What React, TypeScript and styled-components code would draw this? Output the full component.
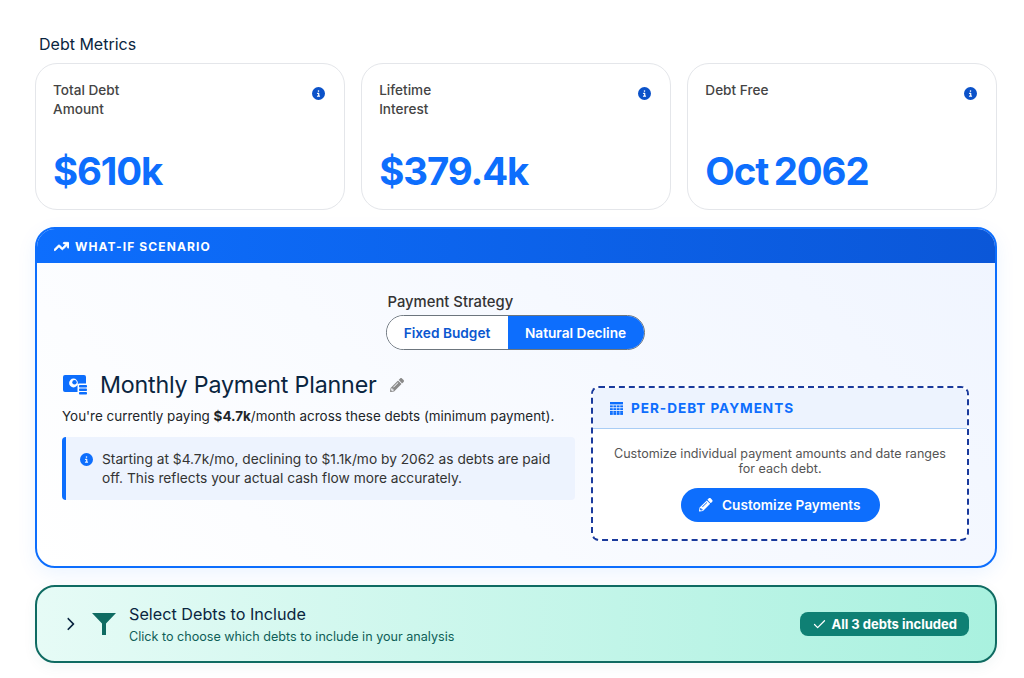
import React from "react";
import styled, { createGlobalStyle } from "styled-components";
import { FaCircleInfo, FaArrowTrendUp, FaChevronRight } from "react-icons/fa6";
import { FaPencilAlt } from "react-icons/fa";
import { Check } from "lucide-react";

const GlobalStyle = createGlobalStyle`
  html, body {
    margin: 0;
    padding: 0;
    background: #ffffff;
  }
  body {
    font-family: Inter, "Liberation Sans", sans-serif;
    -webkit-font-smoothing: antialiased;
  }
`;

const metrics = [
  { label: "Total Debt Amount", value: "$610k" },
  { label: "Lifetime Interest", value: "$379.4k" },
  { label: "Debt Free", value: "Oct 2062" },
];

const BillIcon = () => (
  <svg width="24" height="20" viewBox="0 0 24 20" aria-hidden="true">
    <path
      fill="#0d6efd"
      fillRule="evenodd"
      d="M2 0h19a2 2 0 0 1 2 2v6.5h-7a1.5 1.5 0 0 0-1.5 1.5v7H2a2 2 0 0 1-2-2V2a2 2 0 0 1 2-2zm8.5 3.6a4.4 4.4 0 0 0-4.4 4.4 4.4 4.4 0 0 0 4.4 4.4 4.4 4.4 0 0 0 4.4-4.4 4.4 4.4 0 0 0-4.4-4.4z"
    />
    <circle cx="11.5" cy="7.2" r="2.2" fill="#0d6efd" />
    <rect x="16" y="10" width="8" height="2.6" rx="0.8" fill="#0d6efd" />
    <rect x="16" y="13.5" width="8" height="2.6" rx="0.8" fill="#0d6efd" />
    <rect x="16" y="17" width="8" height="2.6" rx="0.8" fill="#0d6efd" />
  </svg>
);

const FunnelIcon = () => (
  <svg width="24" height="22" viewBox="0 0 24 22" aria-hidden="true">
    <path fill="#0f6b62" d="M0 0h24L14 10.5V22h-4V10.5z" />
  </svg>
);

const TableIcon = () => (
  <svg width="13" height="13" viewBox="0 0 13 13" aria-hidden="true" fill="#0d6efd">
    <rect x="0" y="0" width="13" height="2.4" />
    {[3.4, 6.2, 9, 11].map((y) =>
      [0, 3.4, 6.8, 10.2].map((x) => <rect key={`${x}-${y}`} x={x} y={y} width="2.8" height="1.9" />)
    )}
  </svg>
);

const App = () => {
  return (
    <Page>
      <GlobalStyle />
      <SectionTitle>Debt Metrics</SectionTitle>
      <MetricGrid>
        {metrics.map((m) => (
          <MetricCard key={m.label}>
            <MetricTop>
              <MetricLabel>{m.label}</MetricLabel>
              <MetricInfo>
                <FaCircleInfo />
              </MetricInfo>
            </MetricTop>
            <MetricValue>{m.value}</MetricValue>
          </MetricCard>
        ))}
      </MetricGrid>

      <ScenarioCard>
        <ScenarioHeader>
          <FaArrowTrendUp />
          WHAT-IF SCENARIO
        </ScenarioHeader>
        <ScenarioBody>
          <StrategyWrap>
            <StrategyLabel>Payment Strategy</StrategyLabel>
            <Toggle>
              <ToggleOption>Fixed Budget</ToggleOption>
              <ToggleOption $active>Natural Decline</ToggleOption>
            </Toggle>
          </StrategyWrap>
          <Columns>
            <Planner>
              <PlannerTitle>
                <BillIcon />
                <h2>Monthly Payment Planner</h2>
                <EditIcon>
                  <FaPencilAlt />
                </EditIcon>
              </PlannerTitle>
              <PlannerText>
                You're currently paying <strong>$4.7k</strong>/month across these debts (minimum payment).
              </PlannerText>
              <Notice>
                <NoticeIcon>
                  <FaCircleInfo />
                </NoticeIcon>
                <span>
                  Starting at $4.7k/mo, declining to $1.1k/mo by 2062 as debts are paid off. This reflects your actual
                  cash flow more accurately.
                </span>
              </Notice>
            </Planner>
            <PerDebt>
              <PerDebtHead>
                <TableIcon />
                PER-DEBT PAYMENTS
              </PerDebtHead>
              <PerDebtBody>
                <p>Customize individual payment amounts and date ranges for each debt.</p>
                <CustomizeButton>
                  <FaPencilAlt />
                  Customize Payments
                </CustomizeButton>
              </PerDebtBody>
            </PerDebt>
          </Columns>
        </ScenarioBody>
      </ScenarioCard>

      <SelectCard>
        <Chevron>
          <FaChevronRight />
        </Chevron>
        <FunnelIcon />
        <SelectText>
          <h3>Select Debts to Include</h3>
          <p>Click to choose which debts to include in your analysis</p>
        </SelectText>
        <IncludedBadge>
          <Check size={15} strokeWidth={2} />
          All 3 debts included
        </IncludedBadge>
      </SelectCard>
    </Page>
  );
};
export default App;

const Page = styled.div`
  width: 1024px;
  height: 678px;
  box-sizing: border-box;
  padding: 34px 27px 0 35px;
  overflow: hidden;
`;

const SectionTitle = styled.div`
  font-size: 16px;
  line-height: 20px;
  color: #0a2540;
  margin: 0 0 9px 4px;
`;

const MetricGrid = styled.div`
  display: grid;
  grid-template-columns: repeat(3, 1fr);
  gap: 16.5px;
`;

const MetricCard = styled.div`
  box-sizing: border-box;
  height: 147px;
  padding: 17px 17px 16px;
  background: #fff;
  border: 1px solid #e4e6ea;
  border-radius: 22px;
  display: flex;
  flex-direction: column;
  justify-content: space-between;
`;

const MetricTop = styled.div`
  display: flex;
  justify-content: space-between;
  align-items: flex-start;
`;

const MetricLabel = styled.div`
  width: 90px;
  font-size: 13.6px;
  font-weight: 500;
  line-height: 19px;
  color: #444;
`;

const MetricInfo = styled.span`
  color: #0b52c9;
  font-size: 13px;
  line-height: 0;
  margin: 6px 2px 0 0;
`;

const MetricValue = styled.div`
  font-size: 38.4px;
  font-weight: 700;
  line-height: 44px;
  letter-spacing: -1.1px;
  word-spacing: -2.5px;
  color: #0d6efd;
`;

const ScenarioCard = styled.div`
  margin-top: 17px;
  border: 2px solid #0d6efd;
  border-radius: 20px;
  overflow: hidden;
  background: linear-gradient(45deg, #ffffff 0%, #f0f5ff 100%);
  box-shadow: 0 6px 20px rgba(13, 110, 253, 0.08);
`;

const ScenarioHeader = styled.div`
  height: 34px;
  box-sizing: border-box;
  padding: 1px 0 0 17px;
  display: flex;
  align-items: center;
  gap: 6px;
  background: linear-gradient(90deg, #0d6efd 0%, #0b57d8 100%);
  color: #fff;
  font-size: 12px;
  font-weight: 700;
  letter-spacing: 1.1px;
  svg {
    font-size: 15px;
    stroke: currentColor;
    stroke-width: 30px;
  }
`;

const ScenarioBody = styled.div`
  height: 303px;
  box-sizing: border-box;
  padding: 31px 25px 0;
`;

const StrategyWrap = styled.div`
  width: 259px;
  margin: 0 auto;
  transform: translateX(-1px);
`;

const StrategyLabel = styled.div`
  font-size: 14.8px;
  font-weight: 500;
  line-height: 17px;
  color: #333;
  margin: 0 0 4px 2px;
`;

const Toggle = styled.div`
  display: flex;
  height: 35px;
  box-sizing: border-box;
  border: 1px solid #6c757d;
  border-radius: 18px;
  overflow: hidden;
`;

const ToggleOption = styled.div<{ $active?: boolean }>`
  display: flex;
  align-items: center;
  justify-content: center;
  flex: ${(p) => (p.$active ? "0 0 136px" : "1")};
  font-size: 13.7px;
  font-weight: 600;
  color: ${(p) => (p.$active ? "#fff" : "#0b57d0")};
  background: ${(p) => (p.$active ? "#0d6efd" : "#fff")};
`;

const Columns = styled.div`
  display: grid;
  grid-template-columns: 513px 378px;
  gap: 16px;
  margin-top: 19px;
`;

const Planner = styled.div`
  padding-top: 0;
`;

const PlannerTitle = styled.div`
  display: flex;
  align-items: center;
  height: 32px;
  padding-left: 1px;
  h2 {
    margin: 0 13px 0 13px;
    font-size: 23.25px;
    font-weight: 400;
    line-height: 32px;
    letter-spacing: -0.2px;
    color: #0a2540;
  }
`;

const EditIcon = styled.span`
  color: #8a8a8a;
  font-size: 14px;
  line-height: 0;
`;

const PlannerText = styled.div`
  margin-top: 5px;
  font-size: 13.45px;
  line-height: 20px;
  color: #212529;
`;

const Notice = styled.div`
  margin-top: 11px;
  box-sizing: border-box;
  height: 63px;
  display: flex;
  align-items: flex-start;
  gap: 9px;
  padding: 13px 16px 0 14px;
  background: #edf3fe;
  border-left: 4px solid #0d6efd;
  border-radius: 4px;
  font-size: 13.75px;
  line-height: 19px;
  color: #333;
`;

const NoticeIcon = styled.span`
  color: #0d6efd;
  font-size: 13px;
  line-height: 0;
  margin-top: 3px;
`;

const PerDebt = styled.div`
  box-sizing: border-box;
  height: 155px;
  margin-top: 17px;
  border: 2px dashed #1a3a9c;
  border-radius: 8px;
  background: #fff;
  overflow: hidden;
`;

const PerDebtHead = styled.div`
  height: 41px;
  box-sizing: border-box;
  display: flex;
  align-items: center;
  gap: 8px;
  padding-left: 17px;
  background: #edf3fe;
  border-bottom: 1px solid #a9cdf5;
  color: #0d6efd;
  font-size: 13.6px;
  font-weight: 700;
  letter-spacing: 0.95px;
`;

const PerDebtBody = styled.div`
  display: flex;
  flex-direction: column;
  align-items: center;
  padding: 17px 20px 0;
  p {
    margin: 0 0 12px;
    text-align: center;
    font-size: 12.55px;
    line-height: 15px;
    color: #555;
  }
`;

const CustomizeButton = styled.button`
  display: flex;
  align-items: center;
  justify-content: center;
  gap: 9px;
  width: 199px;
  height: 34px;
  border: 0;
  border-radius: 17px;
  background: #0d6efd;
  color: #fff;
  font-family: inherit;
  font-size: 13.6px;
  font-weight: 600;
`;

const SelectCard = styled.div`
  margin-top: 17px;
  height: 78px;
  box-sizing: border-box;
  display: flex;
  align-items: center;
  padding: 0 26px;
  border: 2px solid #0f6b62;
  border-radius: 20px;
  background: linear-gradient(90deg, #e6fbf6 0%, #a9f1df 100%);
  box-shadow: 0 4px 14px rgba(15, 107, 98, 0.06);
`;

const Chevron = styled.span`
  color: #0a2540;
  font-size: 14px;
  line-height: 0;
  margin-right: 15px;
`;

const SelectText = styled.div`
  margin-left: 13px;
  flex: 1;
  h3 {
    margin: 0;
    font-size: 16.2px;
    font-weight: 400;
    line-height: 20px;
    color: #0a2540;
  }
  p {
    margin: 5px 0 0;
    font-size: 12.6px;
    line-height: 16px;
    color: #0f5f58;
  }
`;

const IncludedBadge = styled.div`
  display: flex;
  align-items: center;
  gap: 5px;
  height: 24px;
  padding: 0 12px;
  border-radius: 8px;
  background: #0f8074;
  color: #fff;
  font-size: 13px;
  font-weight: 700;
`;
